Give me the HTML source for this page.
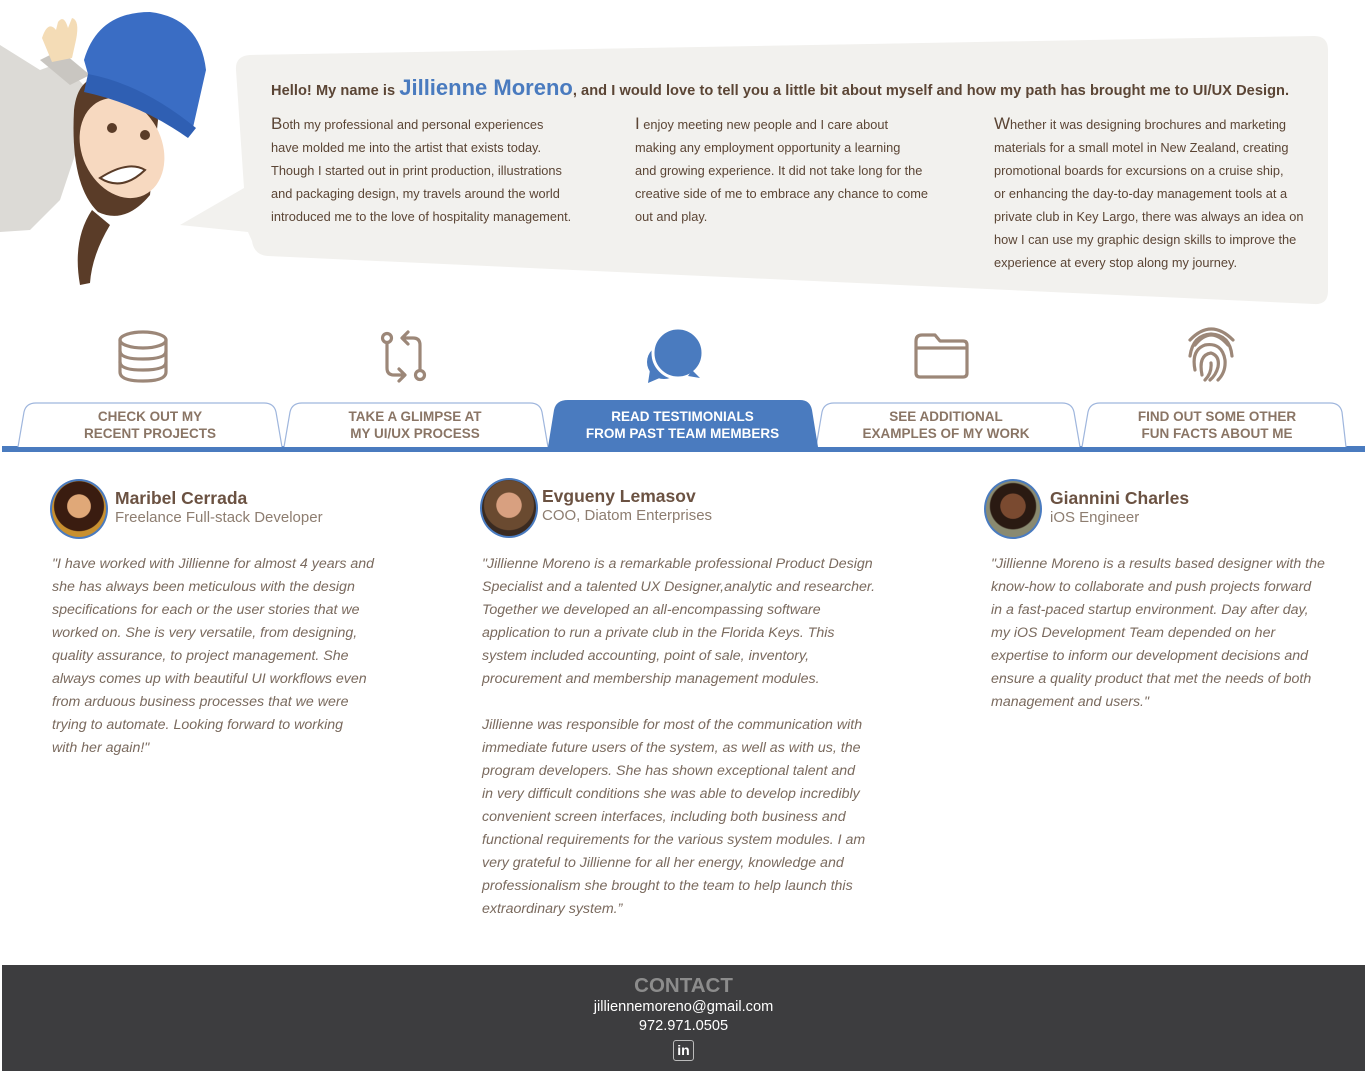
<!DOCTYPE html>
<html><head><meta charset="utf-8">
<style>
*{margin:0;padding:0;box-sizing:border-box}
body{width:1365px;height:1071px;position:relative;background:#fff;font-family:"Liberation Sans",sans-serif;color:#5b4535;overflow:hidden}
.a{position:absolute}
.p{font-size:12.8px;line-height:23px;color:#5b4535;white-space:nowrap}
.p b.cap{font-weight:normal;font-size:17px}
.tab{position:absolute;top:403px;height:46px;text-align:center;font-weight:bold;font-size:13.5px;line-height:17px;color:#8a7565;padding-top:5px}
.q{font-size:14.2px;line-height:23px;font-style:italic;color:#7a6a5e;white-space:nowrap}
.nm{font-size:17.5px;font-weight:bold;color:#6b5242}
.rl{font-size:15px;color:#8d7d70}
.av{position:absolute;width:58px;height:60px;border-radius:50%;border:2px solid #4a7bbf;overflow:hidden}
</style></head><body>

<svg class="a" style="left:0;top:0" width="1365" height="460">
 <path d="M250 55 L1314 36 Q1328 36 1328 50 L1328 291 Q1328 305 1314 304 L268 256 Q254 255 252 241 L248 232 L180 225 L244 188 L236 70 Q235 56 250 55Z" fill="#f2f1ee"/>
 <path d="M0 45 L40 70 L62 62 L88 90 L80 140 L60 200 L30 230 L0 232Z" fill="#dcdad6"/>
 <path d="M40 60 L60 50 L90 75 L70 85Z" fill="#c9c6c1"/>
 <path d="M42 38 Q48 20 56 30 L58 22 Q64 14 68 28 L72 18 Q80 20 76 40 L72 58 L52 62Z" fill="#f4dcb6"/>
 <path d="M74 110 Q78 72 112 76 Q150 82 158 120 L150 195 Q125 225 98 212 Q70 185 74 110Z" fill="#5a3c28"/>
 <path d="M92 210 Q72 240 80 285 L90 283 Q92 255 110 225Z" fill="#5a3c28"/>
 <ellipse cx="122" cy="148" rx="40" ry="52" transform="rotate(-25 122 148)" fill="#f7d9c0"/>
 <path d="M100 178 Q122 192 145 170 Q128 160 100 178Z" fill="#fff" stroke="#5a3c28" stroke-width="2"/>
 <circle cx="112" cy="128" r="5" fill="#5a3c28"/><circle cx="145" cy="135" r="5" fill="#5a3c28"/>
 <path d="M84 60 Q98 12 150 12 Q200 18 206 70 L192 132 Q150 100 92 88Z" fill="#3a6dc4"/>
 <path d="M88 74 Q142 84 196 128 L188 138 Q140 104 84 92Z" fill="#2f5fb3"/>
 <rect x="2" y="446" width="1363" height="6" fill="#4a7bbf"/>
 <g fill="#fff" stroke="#9fb6dd" stroke-width="1.2">
  <path d="M18 447 L24 412 Q26 403 36 403 L264 403 Q274 403 276 412 L282 447"/>
  <path d="M284 447 L290 412 Q292 403 302 403 L530 403 Q540 403 542 412 L548 447"/>
  <path d="M816 447 L822 412 Q824 403 834 403 L1062 403 Q1072 403 1074 412 L1080 447"/>
  <path d="M1082 447 L1088 412 Q1090 403 1100 403 L1330 403 Q1340 403 1342 412 L1346 447"/>
 </g>
 <path d="M548 447 L554 410 Q556 400 568 400 L800 400 Q810 400 812 410 L818 447Z" fill="#4a7bbf"/>
 <g fill="none" stroke="#9c8778" stroke-width="3.2" stroke-linecap="round" stroke-linejoin="round">
  <ellipse cx="143" cy="340" rx="23" ry="8"/>
  <path d="M120 340 V372 Q120 381 143 381 Q166 381 166 372 V340"/>
  <path d="M120 351 Q120 359 143 359 Q166 359 166 351"/>
  <path d="M120 362 Q120 370 143 370 Q166 370 166 362"/>
  <circle cx="387" cy="338" r="4.5"/><circle cx="420" cy="375" r="4.5"/>
  <path d="M387 343 V368 Q387 375 394 375 H404 M399 369 L405 375 L399 381"/>
  <path d="M420 370 V345 Q420 338 413 338 H403 M408 332 L402 338 L408 344"/>
  <path d="M916 341 Q916 335 922 335 H935 L940 341 H963 Q967 341 967 345 V373 Q967 377 963 377 H920 Q916 377 916 373Z M916 348 H967"/>
  <path d="M1195 345 Q1211 325 1228 345 M1190 356 Q1193 335 1211 334 Q1230 335 1232 356 M1195 370 Q1191 350 1205 345 Q1222 342 1225 360 Q1226 372 1218 380 M1202 375 Q1198 355 1211 353 Q1220 356 1218 367 Q1216 375 1210 380 M1211 363 Q1212 373 1205 380 M1190 340 Q1211 318 1233 340"/>
 </g>
 <g fill="#4a7bbf">
  <circle cx="664" cy="362" r="17"/><path d="M650 370 L648 383 L662 377Z"/>
  <circle cx="678" cy="353" r="25" stroke="#fff" stroke-width="3"/><path d="M692 370 L700 378 L688 376Z"/>
 </g>
</svg>

<div class="a" style="left:271px;top:75px;font-size:14.6px;letter-spacing:0.05px;font-weight:bold;white-space:nowrap;color:#5b4535">Hello! My name is <span style="font-size:22px;letter-spacing:0;color:#4a7bbf;font-weight:bold">Jillienne Moreno</span>, and I would love to tell you a little bit about myself and how my path has brought me to UI/UX Design.</div>
<div class="a p" style="left:271px;top:112px"><b class="cap">B</b>oth my professional and personal experiences<br>have molded me into the artist that exists today.<br>Though I started out in print production, illustrations<br>and packaging design, my travels around the world<br>introduced me to the love of hospitality management.</div>
<div class="a p" style="left:635px;top:112px"><b class="cap">I</b> enjoy meeting new people and I care about<br>making any employment opportunity a learning<br>and growing experience. It did not take long for the<br>creative side of me to embrace any chance to come<br>out and play.</div>
<div class="a p" style="left:994px;top:112px"><b class="cap">W</b>hether it was designing brochures and marketing<br>materials for a small motel in New Zealand, creating<br>promotional boards for excursions on a cruise ship,<br>or enhancing the day-to-day management tools at a<br>private club in Key Largo, there was always an idea on<br>how I can use my graphic design skills to improve the<br>experience at every stop along my journey.</div>

<div class="tab" style="left:22px;width:256px">CHECK OUT MY<br>RECENT PROJECTS</div>
<div class="tab" style="left:287px;width:256px">TAKE A GLIMPSE AT<br>MY UI/UX PROCESS</div>
<div class="tab" style="left:553px;width:259px;color:#fff">READ TESTIMONIALS<br>FROM PAST TEAM MEMBERS</div>
<div class="tab" style="left:818px;width:256px">SEE ADDITIONAL<br>EXAMPLES OF MY WORK</div>
<div class="tab" style="left:1087px;width:260px">FIND OUT SOME OTHER<br>FUN FACTS ABOUT ME</div>

<div class="av" style="left:50px;top:479px;background:radial-gradient(circle at 50% 45%,#e0a878 0 28%,#3a1c10 30% 60%,#c89030 62%)"></div>
<div class="a nm" style="left:115px;top:488px">Maribel Cerrada</div>
<div class="a rl" style="left:115px;top:509px">Freelance Full-stack Developer</div>
<div class="av" style="left:480px;top:478px;background:radial-gradient(circle at 50% 45%,#d8a080 0 30%,#6a4a30 32% 60%,#3a2a20 62%)"></div>
<div class="a nm" style="left:542px;top:486px">Evgueny Lemasov</div>
<div class="a rl" style="left:542px;top:507px">COO, Diatom Enterprises</div>
<div class="av" style="left:984px;top:479px;background:radial-gradient(circle at 50% 45%,#7a4a30 0 30%,#2a1a12 32% 55%,#8a8a70 58%)"></div>
<div class="a nm" style="left:1050px;top:488px">Giannini Charles</div>
<div class="a rl" style="left:1050px;top:509px">iOS Engineer</div>

<div class="a q" style="left:52px;top:553px">"I have worked with Jillienne for almost 4 years and<br>she has always been meticulous with the design<br>specifications for each or the user stories that we<br>worked on. She is very versatile, from designing,<br>quality assurance, to project management. She<br>always comes up with beautiful UI workflows even<br>from arduous business processes that we were<br>trying to automate. Looking forward to working<br>with her again!"</div>
<div class="a q" style="left:482px;top:553px">"Jillienne Moreno is a remarkable professional Product Design<br>Specialist and a talented UX Designer,analytic and researcher.<br>Together we developed an all-encompassing software<br>application to run a private club in the Florida Keys. This<br>system included accounting, point of sale, inventory,<br>procurement and membership management modules.<br><br>Jillienne was responsible for most of the communication with<br>immediate future users of the system, as well as with us, the<br>program developers. She has shown exceptional talent and<br>in very difficult conditions she was able to develop incredibly<br>convenient screen interfaces, including both business and<br>functional requirements for the various system modules. I am<br>very grateful to Jillienne for all her energy, knowledge and<br>professionalism she brought to the team to help launch this<br>extraordinary system.”</div>
<div class="a q" style="left:991px;top:553px">"Jillienne Moreno is a results based designer with the<br>know-how to collaborate and push projects forward<br>in a fast-paced startup environment. Day after day,<br>my iOS Development Team depended on her<br>expertise to inform our development decisions and<br>ensure a quality product that met the needs of both<br>management and users."</div>

<div class="a" style="left:2px;top:965px;width:1363px;height:106px;background:#3d3d3f;text-align:center;color:#fff">
 <div style="font-size:20.5px;font-weight:bold;color:#8c8c8c;margin-top:9px;line-height:24px">CONTACT</div>
 <div style="font-size:14.6px;line-height:19px">jilliennemoreno@gmail.com</div>
 <div style="font-size:14.6px;line-height:19px">972.971.0505</div>
 <div style="display:inline-block;margin-top:4px;width:21px;height:21px;border:1.5px solid #bbb;border-radius:3px;font-size:14px;font-weight:bold;line-height:18px">in</div>
</div>
</body></html>
